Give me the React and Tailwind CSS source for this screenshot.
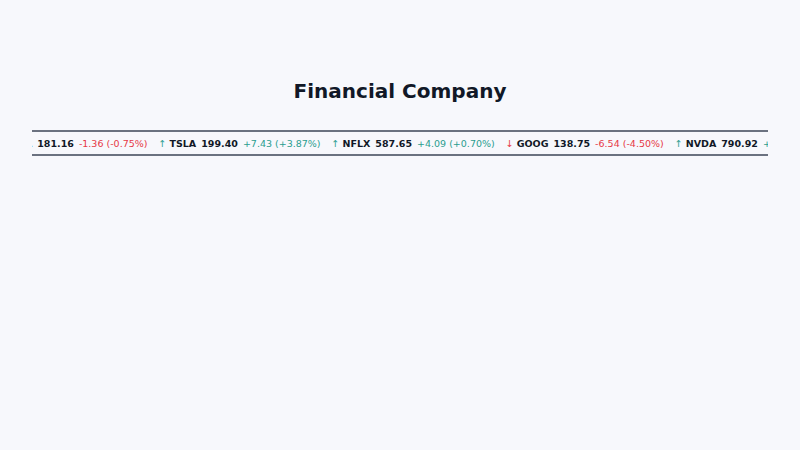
const stocks = [
  { symbol: "AAPL", price: "181.16", change: "-1.36 (-0.75%)", up: false },
  { symbol: "TSLA", price: "199.40", change: "+7.43 (+3.87%)", up: true },
  { symbol: "NFLX", price: "587.65", change: "+4.09 (+0.70%)", up: true },
  { symbol: "GOOG", price: "138.75", change: "-6.54 (-4.50%)", up: false },
  { symbol: "NVDA", price: "790.92", change: "+5.12 (+0.65%)", up: true },
  { symbol: "MSFT", price: "415.20", change: "+2.31 (+0.56%)", up: true },
];

const TickerItem = ({ stock }) => (
  <div className="flex items-center shrink-0 px-[5.5px]">
    <span className={stock.up ? "text-[#2a9d8f]" : "text-[#e63946]"}>
      {stock.up ? "↑" : "↓"}
    </span>
    <span className="ml-[3px] font-bold text-[#111827]">{stock.symbol}</span>
    <span className="ml-[5px] font-bold text-[#111827]">{stock.price}</span>
    <span
      className={`ml-[5px] ${stock.up ? "text-[#2a9d8f]" : "text-[#e63946]"}`}
    >
      {stock.change}
    </span>
  </div>
);

const App = () => {
  return (
    <div
      className="min-h-[450px] w-full bg-[#f7f8fc] px-8"
      style={{ fontFamily: "'DejaVu Sans', sans-serif" }}
    >
      <h1 className="pt-[78px] text-center text-[20px] font-bold leading-[26px] text-[#111827]">
        Financial Company
      </h1>
      <div className="mt-[26px] overflow-hidden border-y-2 border-[#6b7280]">
        <div className="flex whitespace-nowrap pt-[6px] pb-[4px] text-[9.5px] leading-[12px] -ml-[44px]">
          {stocks.map((s) => (
            <TickerItem key={s.symbol} stock={s} />
          ))}
        </div>
      </div>
    </div>
  );
};

export default App;
